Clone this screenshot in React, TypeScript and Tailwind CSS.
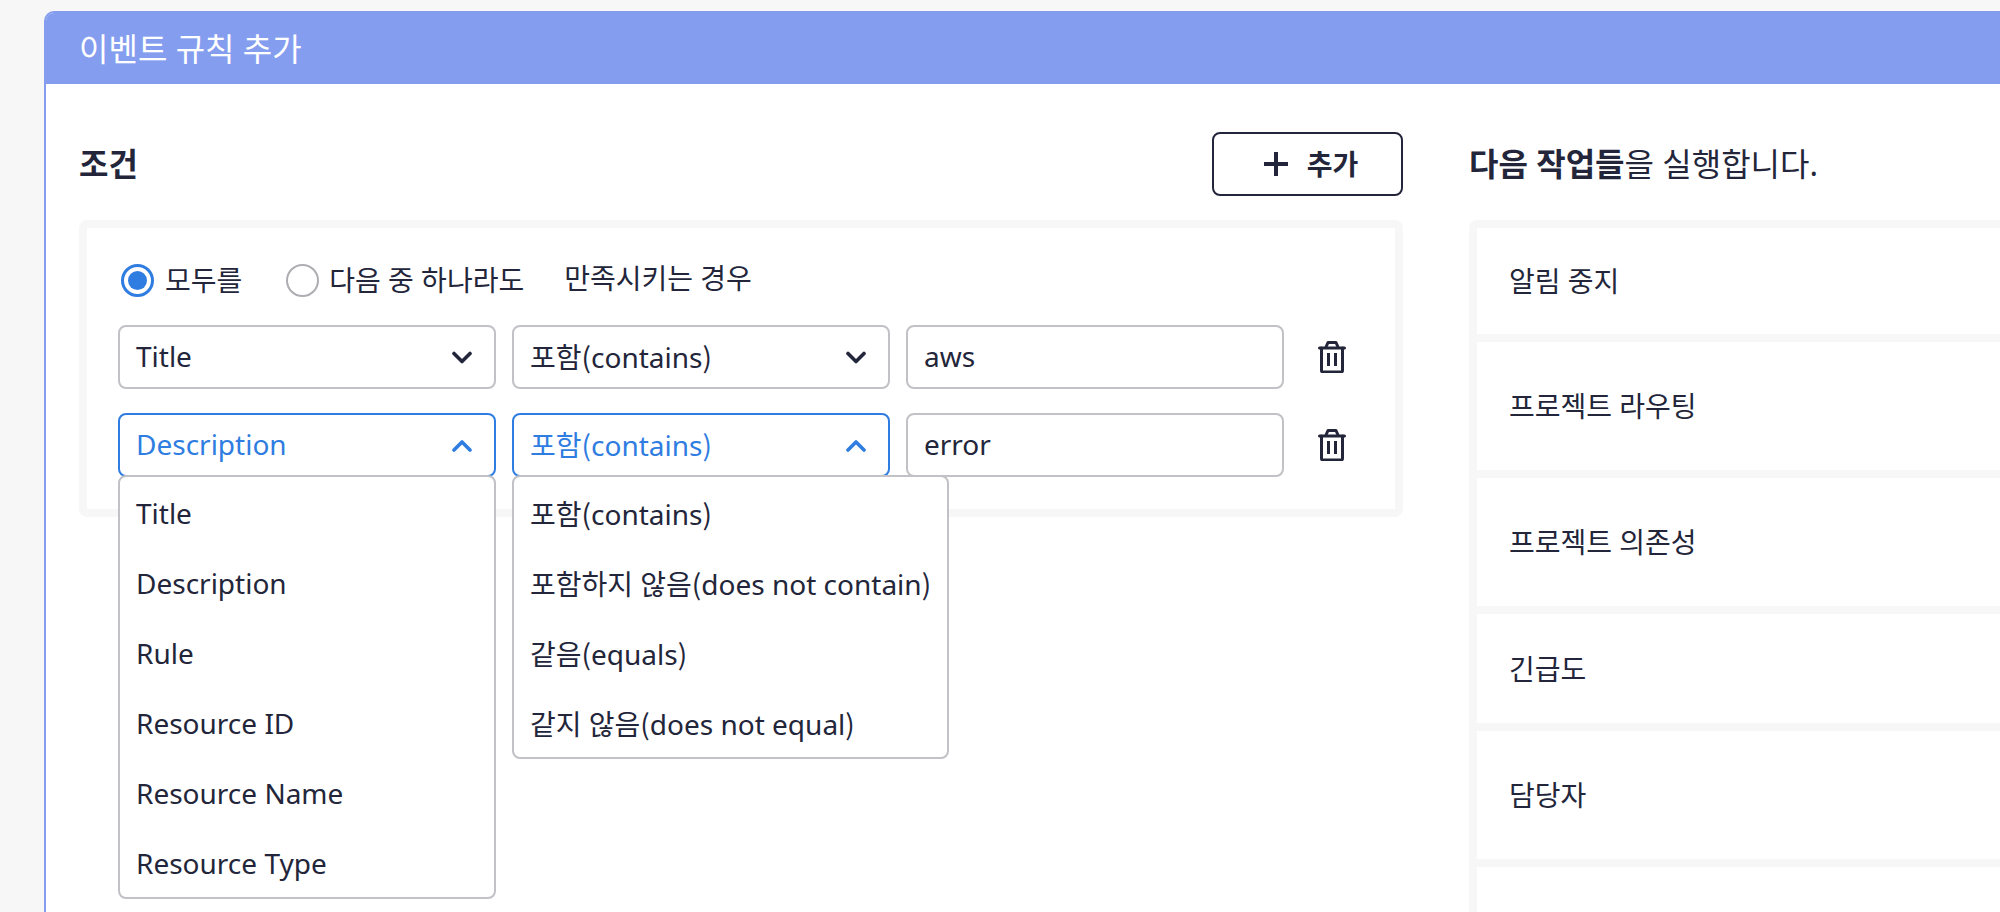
import { useState } from 'react';

const fieldOptions = ['Title', 'Description', 'Rule', 'Resource ID', 'Resource Name', 'Resource Type'];
const matchOptions = ['포함(contains)', '포함하지 않음(does not contain)', '같음(equals)', '같지 않음(does not equal)'];

const actions = [
  { label: '알림 중지', height: 'h-[106px]' },
  { label: '프로젝트 라우팅', height: 'h-[128px]' },
  { label: '프로젝트 의존성', height: 'h-[128px]' },
  { label: '긴급도', height: 'h-[109px]' },
  { label: '담당자', height: 'h-[128px]' },
  { label: '', height: 'h-[128px]' },
];

// parentheses come from the CJK face, they are a bit wider there
function Label({ text }: { text: string }) {
  return (
    <span>
      {text.split(/([()])/).map((part, i) =>
        part === '(' || part === ')' ? (
          <span key={i} className="font-['Noto_Sans_CJK_KR',sans-serif]">
            {part}
          </span>
        ) : (
          part
        ),
      )}
    </span>
  );
}

function Chevron({ up }: { up?: boolean }) {
  return (
    <svg width="20" height="13" viewBox="0 0 20 13" fill="none" stroke="currentColor" strokeWidth="3.6" strokeLinecap="round" strokeLinejoin="round">
      <path d={up ? 'M2 11 L10 3 L18 11' : 'M2 2.5 L10 10.5 L18 2.5'} />
    </svg>
  );
}

function TrashIcon() {
  return (
    <svg width="28" height="32" viewBox="0 0 28 32" fill="none" stroke="#23263a" strokeWidth="3" strokeLinecap="round" strokeLinejoin="round">
      <path d="M1.5 7 H26.5" />
      <path d="M8 6 L10 1.5 H18 L20 6" />
      <path d="M3.5 7 V29.5 Q3.5 31 5 31 H23 Q24.5 31 24.5 29.5 V7" />
      <path d="M10.5 12 V25 M17.5 12 V25" strokeLinecap="butt" />
    </svg>
  );
}

function Select({ value, open, options }: { value: string; open?: boolean; options: string[] }) {
  return (
    <div className="relative w-[378px]">
      <div
        className={`flex h-16 items-center justify-between rounded-lg border-2 bg-white pl-4 pr-[22px] ${
          open ? 'border-[#2f7de1] text-[#2f7de1]' : 'border-[#c1c1c6] text-[#23263a]'
        }`}
      >
        <span className="-translate-y-px">
          <Label text={value} />
        </span>
        <Chevron up={open} />
      </div>
      {open && (
        <ul className="absolute left-0 top-[62px] z-10 min-w-full rounded-lg border-2 border-[#c1c1c6] bg-white text-[#23263a] whitespace-nowrap">
          {options.map((option) => (
            <li key={option} className="flex h-[70px] items-center px-4 pt-0.5">
              <Label text={option} />
            </li>
          ))}
        </ul>
      )}
    </div>
  );
}

function ConditionRow({ field, match, text, open }: { field: string; match: string; text: string; open?: boolean }) {
  return (
    <div className="flex items-center gap-4">
      <Select value={field} open={open} options={fieldOptions} />
      <Select value={match} open={open} options={matchOptions} />
      <div className="flex h-16 w-[378px] items-center rounded-lg border-2 border-[#c1c1c6] bg-white px-4 text-[#23263a]">
        <span className="-translate-y-px">{text}</span>
      </div>
      <button className="ml-[18px]">
        <TrashIcon />
      </button>
    </div>
  );
}

export default function App() {
  const [mode] = useState<'all' | 'any'>('all');

  return (
    <div className="h-[912px] w-[2000px] overflow-hidden bg-[#f7f7f7] pl-[44px] pt-[11px] font-['Noto_Sans','Noto_Sans_CJK_KR',sans-serif] text-[28px] text-[#23263a]">
      <div className="w-[2100px] overflow-hidden rounded-t-[10px] border-2 border-[#849def] bg-white">
        <div className="flex h-[71px] items-center bg-[#849def] px-[33px] text-[32px] text-white">이벤트 규칙 추가</div>

        <div className="flex gap-[66px] px-[33px] pt-12 pb-10">
          {/* Conditions */}
          <div className="w-[1324px] shrink-0">
            <div className="mb-6 flex h-16 items-center justify-between">
              <h2 className="text-[32px] font-bold">조건</h2>
              <button className="flex h-16 w-[191px] items-center justify-center gap-[18px] rounded-lg border-2 border-[#23263a] pl-1.5 font-bold">
                <svg width="26" height="26" viewBox="0 0 26 26" fill="none" stroke="#23263a" strokeWidth="4">
                  <path d="M13 1 V25 M1 13 H25" />
                </svg>
                추가
              </button>
            </div>

            <div className="rounded-lg border-8 border-[#f7f7f7] px-[31px] pt-9 pb-8">
              <div className="mb-[29px] flex h-8 items-center">
                <span className="ml-[3px] flex size-[33px] items-center justify-center rounded-full border-[3px] border-[#2f7de1]">
                  <span className={mode === 'all' ? 'size-[19px] rounded-full bg-[#2f7de1]' : ''} />
                </span>
                <span className="ml-[11px]">모두를</span>
                <span className="ml-[44px] size-[33px] rounded-full border-2 border-[#adadb2]" />
                <span className="ml-[10px]">다음 중 하나라도</span>
                <span className="ml-10 -translate-y-0.5">만족시키는 경우</span>
              </div>
              <div className="flex flex-col gap-6">
                <ConditionRow field="Title" match="포함(contains)" text="aws" />
                <ConditionRow field="Description" match="포함(contains)" text="error" open />
              </div>
            </div>
          </div>

          {/* Actions */}
          <div className="flex-1">
            <div className="mb-6 flex h-16 items-center text-[32px]">
              <p>
                <strong className="font-bold">다음 작업들</strong>을 실행합니다.
              </p>
            </div>
            <div className="flex flex-col gap-2 rounded-lg border-8 border-[#f7f7f7] bg-[#f7f7f7]">
              {actions.map((action, i) => (
                <div key={i} className={`flex items-center bg-white px-8 ${action.height}`}>
                  {action.label}
                </div>
              ))}
            </div>
          </div>
        </div>
      </div>
    </div>
  );
}
